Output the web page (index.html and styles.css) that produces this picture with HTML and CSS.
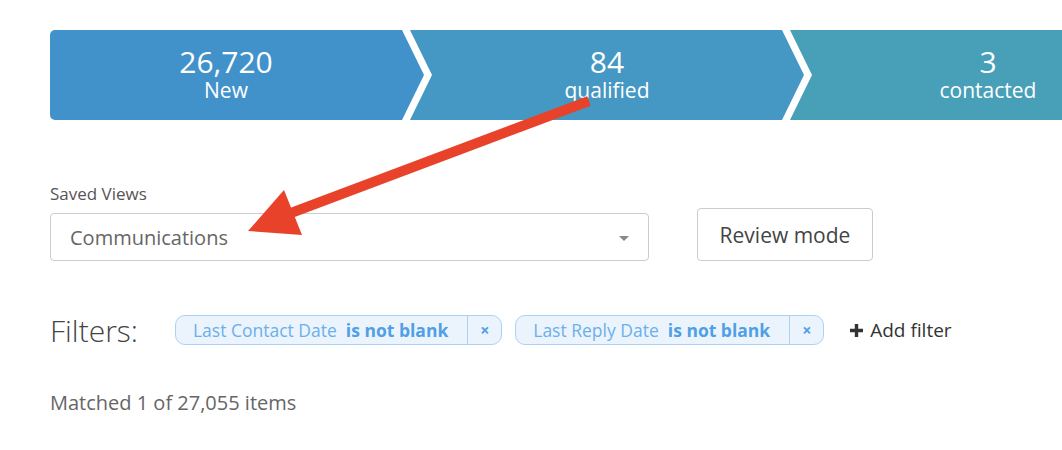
FILE: index.html
```html
<!DOCTYPE html>
<html lang="en">
<head>
<meta charset="utf-8">
<title>Pipeline</title>
<link rel="stylesheet" href="styles.css">
</head>
<body>
<div class="page">
  <div class="pipeline">
    <div class="stage stage-new">
      <div class="stage-count">26,720</div>
      <div class="stage-label">New</div>
    </div>
    <div class="stage stage-qualified">
      <div class="stage-count">84</div>
      <div class="stage-label">qualified</div>
    </div>
    <div class="stage stage-contacted">
      <div class="stage-count">3</div>
      <div class="stage-label">contacted</div>
    </div>
  </div>

  <div class="views-label">Saved Views</div>
  <div class="views-row">
    <div class="select">
      <span class="select-text">Communications</span>
      <span class="select-caret"></span>
    </div>
    <button class="btn">Review mode</button>
  </div>

  <div class="filters-row">
    <span class="filters-title">Filters:</span>
    <div class="chip">
      <span class="chip-body"><span class="chip-field">Last Contact Date</span><b class="chip-op">is not blank</b></span>
      <span class="chip-x">×</span>
    </div>
    <div class="chip">
      <span class="chip-body"><span class="chip-field">Last Reply Date</span><b class="chip-op">is not blank</b></span>
      <span class="chip-x">×</span>
    </div>
    <span class="add-filter">
      <svg class="plus" width="15" height="15" viewBox="0 0 15 15"><path d="M7.5 1v13M1 7.5h13" stroke="#333" stroke-width="3.4" fill="none"/></svg>
      Add filter
    </span>
  </div>

  <div class="matched">Matched 1 of 27,055 items</div>

  <svg class="annotation" width="1062" height="450" viewBox="0 0 1062 450">
    <line x1="589" y1="101" x2="283" y2="216" stroke="#e8432a" stroke-width="10"/>
    <polygon points="248,231 284,190 302,235" fill="#e8432a"/>
  </svg>
</div>
</body>
</html>
```

FILE: styles.css
```css
html, body {
  margin: 0;
  padding: 0;
  background: #fff;
  overflow: hidden;
}

body {
  font-family: "Open Sans", "Noto Sans", sans-serif;
  color: #444;
}

.page {
  position: relative;
  width: 1062px;
  height: 450px;
  padding: 30px 0 0 50px;
  box-sizing: border-box;
  overflow: hidden;
}

.pipeline {
  display: flex;
  height: 90px;
  width: 1200px;
}

.stage {
  height: 90px;
  display: flex;
  flex-direction: column;
  align-items: center;
  padding-top: 15px;
  box-sizing: border-box;
  color: #fff;
  flex: none;
}

.stage-count {
  font-size: 30px;
  line-height: 33px;
}

.stage-label {
  font-size: 21px;
  line-height: 24px;
}

.stage-new {
  width: 374px;
  padding-right: 22px;
  background: #4192ca;
  border-radius: 5px 0 0 5px;
  clip-path: polygon(0 0, 352px 0, 374px 45px, 352px 90px, 0 90px);
}

.stage-qualified {
  width: 394px;
  margin-left: -14px;
  padding-left: 22px;
  padding-right: 22px;
  background: #4598c3;
  clip-path: polygon(0 0, 372px 0, 394px 45px, 372px 90px, 0 90px, 22px 45px);
}

.stage-contacted {
  width: 374px;
  margin-left: -14px;
  padding-left: 22px;
  background: #479fb8;
  clip-path: polygon(0 0, 100% 0, 100% 100%, 0 90px, 22px 45px);
}

.views-label {
  margin-top: 64px;
  font-size: 17px;
  line-height: 20px;
  color: #555;
}

.views-row {
  display: flex;
  align-items: flex-end;
  margin-top: 4px;
}

.select {
  width: 599px;
  height: 48px;
  box-sizing: border-box;
  border: 1px solid #ccc;
  border-radius: 4px;
  display: flex;
  align-items: center;
  justify-content: space-between;
  padding: 0 19px 0 19px;
}

.select-text {
  font-size: 20px;
  color: #666;
}

.select-caret {
  width: 0;
  height: 0;
  border-left: 5px solid transparent;
  border-right: 5px solid transparent;
  border-top: 5px solid #888;
  margin-top: 2px;
}

.btn {
  margin-left: 48px;
  width: 176px;
  height: 53px;
  box-sizing: border-box;
  border: 1px solid #ccc;
  border-radius: 4px;
  background: #fff;
  font-family: inherit;
  font-size: 21px;
  color: #444;
  padding: 0;
}

.filters-row {
  display: flex;
  align-items: center;
  margin-top: 54px;
  height: 30px;
}

.filters-title {
  font-size: 30px;
  color: #444;
  margin-right: 37px;
  font-weight: 300;
}

.chip {
  display: flex;
  height: 30px;
  box-sizing: border-box;
  border: 1.5px solid #abd1f5;
  border-radius: 10px;
  background: #ebf4fd;
  margin-right: 13px;
  overflow: hidden;
}

.chip-body {
  display: flex;
  align-items: center;
  padding: 0 19px 0 17px;
  font-size: 17.5px;
  white-space: nowrap;
}

.chip-field {
  color: #6cafe9;
  margin-right: 9px;
}

.chip-op {
  color: #519fe4;
  font-weight: 700;
}

.chip-x {
  width: 33px;
  border-left: 1.5px solid #abd1f5;
  display: flex;
  align-items: center;
  justify-content: center;
  color: #519fe4;
  font-weight: 700;
  font-size: 16px;
}

.add-filter {
  display: flex;
  align-items: center;
  margin-left: 12px;
  font-size: 19px;
  color: #333;
  gap: 6px;
}

.plus {
  display: block;
}

.matched {
  margin-top: 46px;
  font-size: 20px;
  line-height: 24px;
  color: #666;
}

.annotation {
  position: absolute;
  left: 0;
  top: 0;
  pointer-events: none;
}
```
